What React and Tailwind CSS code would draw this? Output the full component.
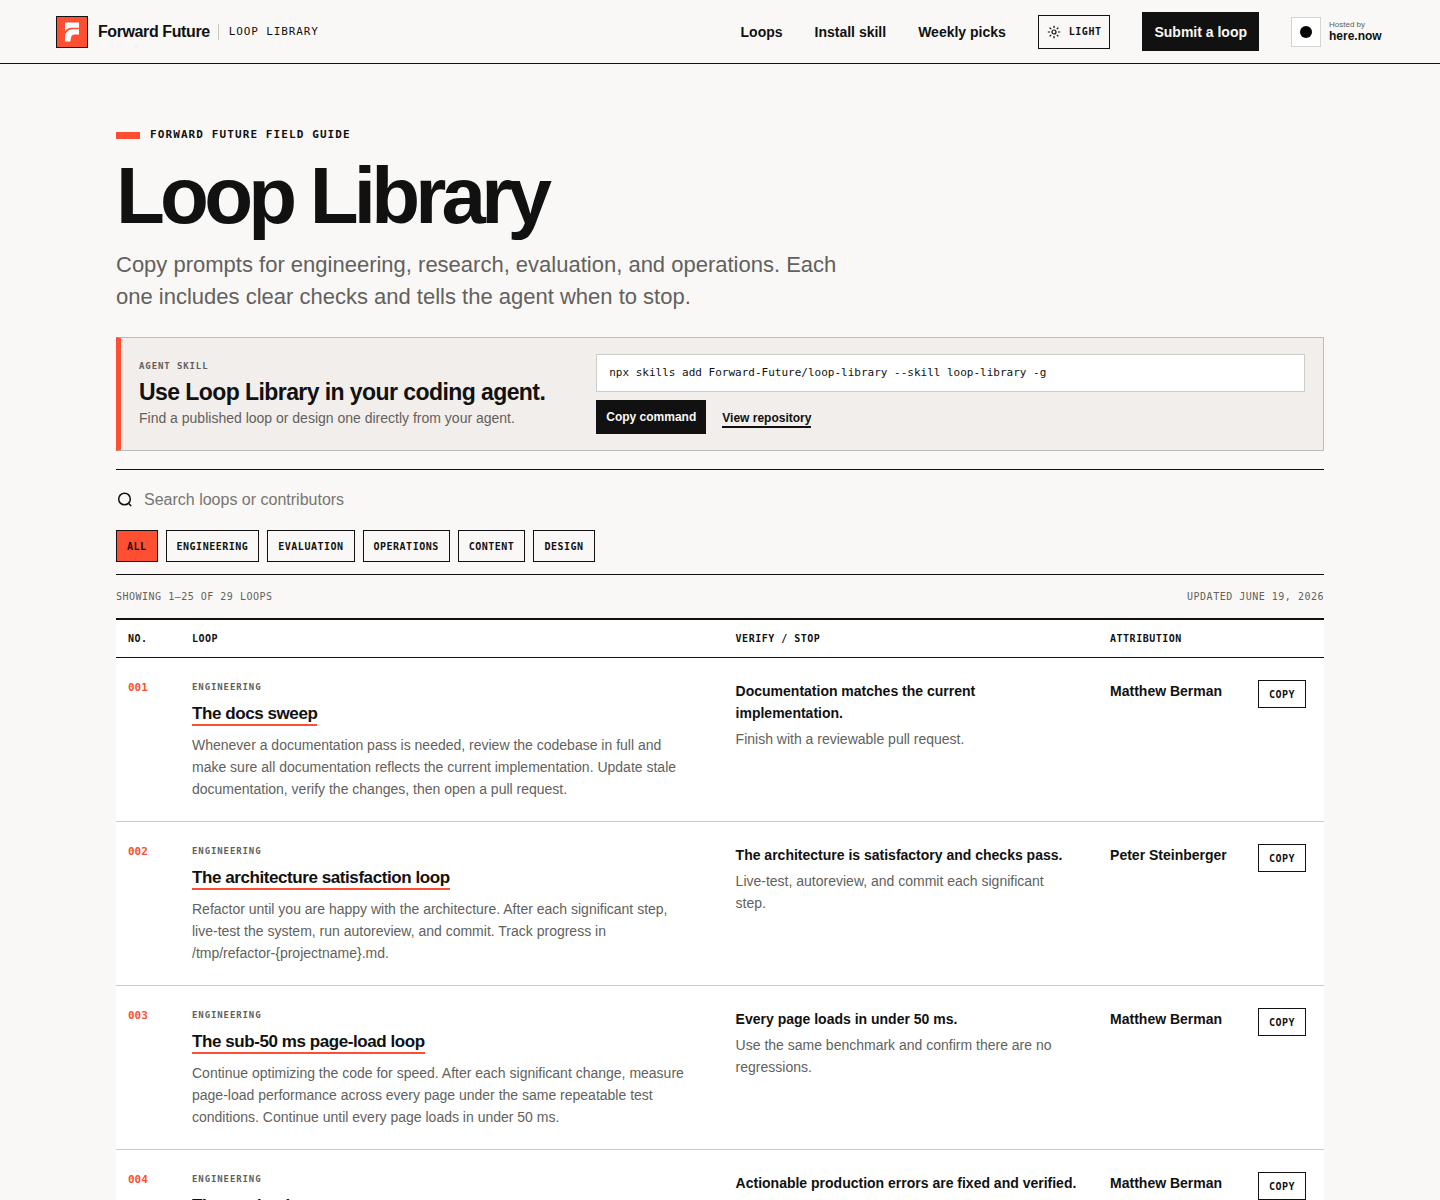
import { useState } from 'react'

const FILTERS = ['All', 'Engineering', 'Evaluation', 'Operations', 'Content', 'Design']

const LOOPS = [
  {
    no: '001',
    category: 'Engineering',
    title: 'The docs sweep',
    prompt:
      'Whenever a documentation pass is needed, review the codebase in full and make sure all documentation reflects the current implementation. Update stale documentation, verify the changes, then open a pull request.',
    verify: 'Documentation matches the current implementation.',
    stop: 'Finish with a reviewable pull request.',
    author: 'Matthew Berman',
  },
  {
    no: '002',
    category: 'Engineering',
    title: 'The architecture satisfaction loop',
    prompt:
      'Refactor until you are happy with the architecture. After each significant step, live-test the system, run autoreview, and commit. Track progress in /tmp/refactor-{projectname}.md.',
    verify: 'The architecture is satisfactory and checks pass.',
    stop: 'Live-test, autoreview, and commit each significant step.',
    author: 'Peter Steinberger',
  },
  {
    no: '003',
    category: 'Engineering',
    title: 'The sub-50 ms page-load loop',
    prompt:
      'Continue optimizing the code for speed. After each significant change, measure page-load performance across every page under the same repeatable test conditions. Continue until every page loads in under 50 ms.',
    verify: 'Every page loads in under 50 ms.',
    stop: 'Use the same benchmark and confirm there are no regressions.',
    author: 'Matthew Berman',
  },
  {
    no: '004',
    category: 'Engineering',
    title: 'The production error sweep',
    verify: 'Actionable production errors are fixed and verified.',
    author: 'Matthew Berman',
  },
]

function LogoMark() {
  return (
    <svg viewBox="0 0 32 32" className="h-8 w-8 shrink-0" aria-hidden="true">
      <rect x="0.5" y="0.5" width="31" height="31" fill="#ff4f32" stroke="#111111" />
      <path d="M9 6.500h14v5.300h-7.500c-3 0-5 1.200-6.500 3.400z" fill="#fff" />
      <path d="M23 13.300v5.200h-4.500c-2 0-3.300 1.300-3.500 3.200l-.6 3.800H9v-4c0-5 3.300-8.200 8.200-8.200z" fill="#fff" />
    </svg>
  )
}

function SunIcon() {
  return (
    <svg viewBox="0 0 14 14" className="h-3.5 w-3.5" fill="none" stroke="currentColor" strokeWidth="1.2" aria-hidden="true">
      <circle cx="7" cy="7" r="2" />
      <path d="M7 .8v2.200M7 11v2.200M.8 7H3M11 7h2.200M2.600 2.600l1.600 1.600M9.800 9.800l1.600 1.600M2.600 11.400l1.600-1.600M9.800 4.200l1.600-1.600" />
    </svg>
  )
}

function SearchIcon() {
  return (
    <svg viewBox="0 0 18 18" className="h-[18px] w-[18px] shrink-0" fill="none" stroke="currentColor" strokeWidth="1.5" aria-hidden="true">
      <circle cx="8.500" cy="8" r="5.800" />
      <path d="M12.400 12.200l2.800 2.800" />
    </svg>
  )
}

function Header() {
  return (
    <header className="flex h-16 items-center justify-between border-b border-[#111111] px-14">
      <a href="#top" className="flex items-center">
        <LogoMark />
        <span className="ml-2.5 text-base font-bold tracking-tight">Forward Future</span>
        <span className="ml-2 border-l border-[#c8c8c5] pl-2.5 font-['DejaVu_Sans_Mono',monospace] text-[11px] leading-4 tracking-[0.08em] uppercase">
          Loop Library
        </span>
      </a>
      <nav className="flex items-center gap-8 text-sm font-bold">
        <a href="#loops">Loops</a>
        <a href="#skill">Install skill</a>
        <a href="#weekly">Weekly picks</a>
        <button
          type="button"
          className="flex h-[34px] items-center gap-2 border border-[#111111] px-2 pt-px font-['DejaVu_Sans_Mono',monospace] text-[10px] tracking-wider uppercase"
        >
          <SunIcon />
          Light
        </button>
        <a href="#submit" className="flex h-[39px] items-center bg-[#111111] px-3 text-[#f9f8f6]">
          Submit a loop
        </a>
        <a href="#host" className="flex items-center gap-2">
          <span className="flex h-[30px] w-[30px] items-center justify-center border border-[#d4d4d1] bg-white">
            <span className="h-3 w-3 rounded-full bg-black" />
          </span>
          <span className="flex min-w-[55px] flex-col pb-0.5 text-xs leading-3">
            <span className="text-[8px] leading-[10px] font-normal text-[#62615d]">Hosted by</span>
            here.now
          </span>
        </a>
      </nav>
    </header>
  )
}

function AgentSkill() {
  return (
    <section
      id="skill"
      className="grid grid-cols-[3fr_5fr] items-center gap-8 border border-l-[5px] border-[#bdbdba] border-l-[#ff4f32] bg-[#f2eeeb] px-[18px] py-4"
    >
      <div>
        <p className="font-['DejaVu_Sans_Mono',monospace] text-[9px] leading-3 font-bold tracking-widest text-[#62615d] uppercase">
          Agent skill
        </p>
        <h2 className="mt-1.5 text-[23px] leading-7 font-bold tracking-tight">Use Loop Library in your coding agent.</h2>
        <p className="mt-0.5 text-sm leading-5 text-[#62615d]">Find a published loop or design one directly from your agent.</p>
      </div>
      <div>
        <code className="flex h-[38px] items-center border border-[#ccccc9] bg-white px-3 font-['DejaVu_Sans_Mono',monospace] text-[11px]">
          npx skills add Forward-Future/loop-library --skill loop-library -g
        </code>
        <div className="mt-2 flex items-center gap-4 text-xs font-bold">
          <button type="button" className="h-[34px] bg-[#111111] px-2.5 text-[#f9f8f6]">
            Copy command
          </button>
          <a href="#repository" className="mt-1 border-b-2 border-[#111111] leading-4">
            View repository
          </a>
        </div>
      </div>
    </section>
  )
}

function LoopRow({ loop }) {
  return (
    <tr className="h-[164px] border-b border-[#ccccc9] align-top">
      <td className="px-3 pt-[22px] font-['DejaVu_Sans_Mono',monospace] text-[11px] leading-4 font-bold text-[#ff4f32]">{loop.no}</td>
      <td className="px-3 pt-[22px] pb-5">
        <p className="font-['DejaVu_Sans_Mono',monospace] text-[9px] leading-[14px] font-bold tracking-widest text-[#62615d] uppercase">
          {loop.category}
        </p>
        <h3 className="mt-2 text-[17px] leading-6 font-bold tracking-tight">
          <a href={`#loop-${loop.no}`} className="inline-block border-b-2 border-[#ff4f32] leading-5">
            {loop.title}
          </a>
        </h3>
        {loop.prompt && <p className="mt-2 max-w-[500px] text-sm leading-[22px] text-[#62615d]">{loop.prompt}</p>}
      </td>
      <td className="px-3 pt-[22px] text-sm leading-[22px]">
        <p className="font-bold">{loop.verify}</p>
        {loop.stop && <p className="mt-1 max-w-[330px] text-[#62615d]">{loop.stop}</p>}
      </td>
      <td className="pt-[22px] pl-3 text-sm leading-[22px] font-bold whitespace-nowrap">{loop.author}</td>
      <td className="pt-[22px] pr-[18px] text-right">
        <button
          type="button"
          aria-label={`Copy ${loop.title}`}
          className="h-7 border border-[#111111] px-2.5 pt-px font-['DejaVu_Sans_Mono',monospace] text-[10px] font-bold tracking-wider uppercase"
        >
          Copy
        </button>
      </td>
    </tr>
  )
}

export default function App() {
  const [filter, setFilter] = useState('All')
  const [query, setQuery] = useState('')

  const visible = LOOPS.filter(
    (loop) =>
      (filter === 'All' || loop.category === filter) &&
      `${loop.title} ${loop.author}`.toLowerCase().includes(query.toLowerCase())
  )

  return (
    <div id="top" className="min-h-screen bg-[#f9f8f6] font-['Liberation_Sans',Arial,sans-serif] text-[#111111]">
      <Header />
      <main className="mx-auto max-w-[1320px] px-14 pt-16">
        {/* Intro */}
        <p className="flex items-center gap-2.5 font-['DejaVu_Sans_Mono',monospace] text-[11px] leading-[14px] font-bold tracking-widest uppercase">
          <span className="h-[7px] w-6 bg-[#ff4f32]" />
          Forward Future Field Guide
        </p>
        <h1 className="mt-3.5 text-[80px] leading-20 font-bold tracking-[-0.06em]">Loop Library</h1>
        <p className="mt-[13px] max-w-[740px] text-[22px] leading-8 text-[#62615d]">
          Copy prompts for engineering, research, evaluation, and operations. Each one includes clear checks and tells the agent when to stop.
        </p>

        <div className="mt-6">
          <AgentSkill />
        </div>

        {/* Search and filters */}
        <div className="mt-[18px] border-y border-[#111111] pb-3">
          <label className="flex h-[60px] items-center gap-2.5">
            <SearchIcon />
            <input
              type="search"
              aria-label="Search loops or contributors"
              placeholder="Search loops or contributors"
              value={query}
              onChange={(e) => setQuery(e.target.value)}
              className="h-10 flex-1 bg-transparent text-base outline-none placeholder:text-[#77756f]"
            />
          </label>
          <div className="flex flex-wrap gap-2">
            {FILTERS.map((name) => (
              <button
                key={name}
                type="button"
                aria-pressed={filter === name}
                onClick={() => setFilter(name)}
                className={`h-8 border border-[#111111] px-2.5 font-['DejaVu_Sans_Mono',monospace] text-[10px] font-bold tracking-wider uppercase ${
                  filter === name ? 'bg-[#ff4f32]' : ''
                }`}
              >
                {name}
              </button>
            ))}
          </div>
        </div>

        <div className="flex h-[43px] items-center justify-between font-['DejaVu_Sans_Mono',monospace] text-[10px] tracking-wider text-[#62615d] uppercase">
          <p>Showing 1–25 of 29 loops</p>
          <p>Updated June 19, 2026</p>
        </div>

        {/* Loops */}
        <table id="loops" className="w-full table-fixed border-collapse border-t-2 border-[#111111] bg-white">
          <thead>
            <tr className="h-[38px] border-b border-[#111111] text-left font-['DejaVu_Sans_Mono',monospace] text-[10px] tracking-wider uppercase">
              <th className="w-16 px-3">No.</th>
              <th className="w-[45%] px-3">Loop</th>
              <th className="w-[31%] px-3">Verify / Stop</th>
              <th className="pl-3">Attribution</th>
              <th className="w-[77px]" aria-label="Copy" />
            </tr>
          </thead>
          <tbody>
            {visible.map((loop) => (
              <LoopRow key={loop.no} loop={loop} />
            ))}
          </tbody>
        </table>
      </main>
    </div>
  )
}
